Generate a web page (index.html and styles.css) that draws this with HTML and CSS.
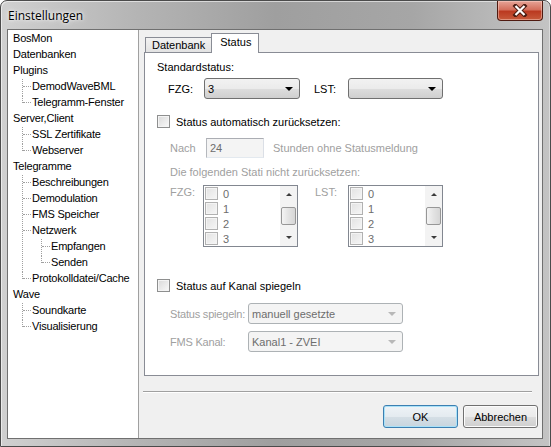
FILE: index.html
```html
<!DOCTYPE html>
<html>
<head>
    <meta charset="utf-8">
    <title>Einstellungen</title>
    <link rel="stylesheet" href="styles.css">
</head>
<body>
<div class="window">
    <div class="titlebar">
        <span class="title">Einstellungen</span>
        <span class="close">
            <svg width="16" height="13" viewBox="0 0 16 13">
                <path d="M3.5 2 L12.5 11 M12.5 2 L3.5 11" stroke="#4a1c12" stroke-width="4.2" stroke-linecap="square"/>
                <path d="M3.5 2 L12.5 11 M12.5 2 L3.5 11" stroke="#ffffff" stroke-width="2.2"/>
            </svg>
        </span>
    </div>

    <div class="client">
        <!-- Baum mit den Einstellungsseiten -->
        <ul class="tree">
            <li><span>BosMon</span></li>
            <li><span>Datenbanken</span></li>
            <li><span>Plugins</span>
                <ul>
                    <li><span>DemodWaveBML</span></li>
                    <li><span>Telegramm-Fenster</span></li>
                </ul>
            </li>
            <li><span>Server,Client</span>
                <ul>
                    <li><span>SSL Zertifikate</span></li>
                    <li><span>Webserver</span></li>
                </ul>
            </li>
            <li><span>Telegramme</span>
                <ul>
                    <li><span>Beschreibungen</span></li>
                    <li><span>Demodulation</span></li>
                    <li><span>FMS Speicher</span></li>
                    <li><span>Netzwerk</span>
                        <ul>
                            <li><span>Empfangen</span></li>
                            <li><span>Senden</span></li>
                        </ul>
                    </li>
                    <li><span>Protokolldatei/Cache</span></li>
                </ul>
            </li>
            <li><span>Wave</span>
                <ul>
                    <li><span>Soundkarte</span></li>
                    <li><span>Visualisierung</span></li>
                </ul>
            </li>
        </ul>

        <div class="pane">
            <div class="tabs">
                <span class="tab">Datenbank</span>
                <span class="tab current">Status</span>
            </div>

            <div class="page">
                <div class="heading">Standardstatus:</div>
                <div class="row std">
                    <span class="lbl fzg">FZG:</span>
                    <div class="combo"><span>3</span><i class="arrow"></i></div>
                    <span class="lbl lst">LST:</span>
                    <div class="combo"><span></span><i class="arrow"></i></div>
                </div>

                <div class="check first"><span class="box"></span>Status automatisch zurücksetzen:</div>

                <div class="row sub after-check">
                    <span class="dis nach">Nach</span>
                    <span class="textbox">24</span>
                    <span class="dis">Stunden ohne Statusmeldung</span>
                </div>
                <div class="sub dis note">Die folgenden Stati nicht zurücksetzen:</div>

                <div class="row sub lists">
                    <span class="dis lbl fzg2">FZG:</span>
                    <div class="listbox">
                        <ul>
                            <li><span class="box"></span>0</li>
                            <li><span class="box"></span>1</li>
                            <li><span class="box"></span>2</li>
                            <li><span class="box"></span>3</li>
                        </ul>
                        <div class="vscroll">
                            <span class="up"></span>
                            <span class="track"><span class="thumb"></span></span>
                            <span class="down"></span>
                        </div>
                    </div>
                    <span class="dis lbl lst2">LST:</span>
                    <div class="listbox">
                        <ul>
                            <li><span class="box"></span>0</li>
                            <li><span class="box"></span>1</li>
                            <li><span class="box"></span>2</li>
                            <li><span class="box"></span>3</li>
                        </ul>
                        <div class="vscroll">
                            <span class="up"></span>
                            <span class="track"><span class="thumb"></span></span>
                            <span class="down"></span>
                        </div>
                    </div>
                </div>

                <div class="check second"><span class="box"></span>Status auf Kanal spiegeln</div>

                <div class="row sub mirror">
                    <span class="dis lbl wide">Status spiegeln:</span>
                    <div class="combo off long"><span>manuell gesetzte</span><i class="arrow"></i></div>
                </div>
                <div class="row sub channel">
                    <span class="dis lbl wide">FMS Kanal:</span>
                    <div class="combo off long"><span>Kanal1 - ZVEI</span><i class="arrow"></i></div>
                </div>
            </div>

            <div class="sep"></div>

            <div class="buttons">
                <span class="btn default">OK</span>
                <span class="btn">Abbrechen</span>
            </div>
        </div>
    </div>
</div>
</body>
</html>
```

FILE: styles.css
```css
html,body,div,span,ul,li{margin:0;padding:0;}
ul,li{list-style:none;}
*{box-sizing:border-box;}
body{
    background:#fff;
    font-family:"Liberation Sans",Arial,sans-serif;
    font-size:11px;
    color:#000;
}

/* Fensterrahmen */
.window{
    width:551px; height:447px;
    border:1px solid #4b4b4b;
    border-radius:7px 7px 0 0;
    padding:0 7px 7px 6px;
    background:linear-gradient(to right,#d0d0d0 0%,#b4b4b4 25%,#9f9f9f 50%,#a6a6a6 75%,#c4c4c4 100%);
    box-shadow:inset 1px 1px 0 rgba(255,255,255,0.55), inset -1px 0 0 rgba(255,255,255,0.4);
}
.titlebar{
    height:28px;
    display:flex; align-items:flex-start;
}
.title{
    font-family:"Open Sans","Noto Sans",sans-serif;
    font-size:12px;
    margin:6px 0 0 1px;
    text-shadow:0 0 6px rgba(255,255,255,0.9),0 0 3px rgba(255,255,255,0.9);
}
.close{
    margin-left:auto;
    width:46px; height:20px;
    border:1px solid #4f1a10; border-top:none;
    border-radius:0 0 4px 4px;
    background:linear-gradient(#e6a497 0%,#d4705d 45%,#bb3a21 55%,#c75a3b 100%);
    box-shadow:inset 0 0 0 1px rgba(255,220,210,0.45);
    display:flex; align-items:center; justify-content:center;
}

.client{
    height:410px;
    border:1px solid #707070;
    display:flex;
    background:#f0f0f0;
}

/* Baumansicht links */
.tree{
    width:131px; flex:none;
    background:#fff;
    border-right:1px solid #a0a0a0;
    letter-spacing:-0.2px;
}
.tree ul{padding-left:19px;}
.tree li{position:relative;}
.tree span{
    display:block; height:16px; line-height:16px;
    padding-left:5px; white-space:nowrap;
}
.tree ul > li::before{
    content:''; position:absolute; left:-5px; top:1px; bottom:0;
    border-left:1px dotted #a0a0a0;
}
.tree ul > li:last-child::before{bottom:auto; height:8px;}
.tree ul > li::after{
    content:''; position:absolute; left:-4px; top:8px; width:8px;
    border-top:1px dotted #a0a0a0;
}

/* rechter Bereich mit Karteireitern */
.pane{flex:1; padding:0 3px 0 5px; display:flex; flex-direction:column;}
.tabs{height:22px; display:flex; align-items:flex-end; padding-left:1px; position:relative; z-index:1;}
.tab{
    height:15px; line-height:14px;
    padding:0 6px 0 6px;
    border:1px solid #898c95; border-bottom:none;
    background:linear-gradient(#f2f2f2,#e3e3e3);
}
.tab.current{
    height:20px; line-height:17px;
    margin-left:-1px; margin-bottom:-1px;
    padding:0 7px 0 8px;
    background:#fff;
}
.page{
    height:324px;
    border:1px solid #898c95;
    background:#fff;
    padding:8px 0 0 12px;
}
.heading{line-height:13px;}
.row{display:flex; align-items:center;}
.std{margin-top:4px; padding-left:11px;}
.lbl{flex:none; white-space:nowrap;}
.fzg{width:36px;}
.lst{width:34px; margin-left:14px;}

/* Kombinationsfelder */
.combo{
    width:96px; height:21px;
    border:1px solid #707070; border-radius:3px;
    background:linear-gradient(#f2f2f2 0%,#ebebeb 50%,#dddddd 51%,#cfcfcf 100%);
    display:flex; align-items:center;
    padding-left:3px;
}
.combo + .lbl + .combo{width:95px;}
.combo span{flex:1; white-space:nowrap;}
.arrow{
    width:0; height:0; margin-right:6px;
    border-left:4px solid transparent; border-right:4px solid transparent;
    border-top:4px solid #000;
}
.combo.off{
    background:#f4f4f4;
    border-color:#adb2b5;
    color:#6d6d6d;
}
.combo.off .arrow{border-top-color:#b8b8b8;}
.combo.long{width:155px;}

/* Kontrollkästchen */
.check{display:flex; align-items:center; height:15px;}
.check.first{margin-top:15px;}
.check.second{margin-top:31px;}
.box{
    flex:none;
    width:13px; height:13px;
    border:1px solid #8e8f8f;
    background:linear-gradient(135deg,#d9d9d9,#f9f9f9);
    box-shadow:inset 0 0 0 1px #f4f4f4;
    margin-right:6px;
}

.dis{color:#a0a0a0;}
.sub{padding-left:13px;}
.after-check{margin-top:9px;}
.nach{width:36px;}
.textbox{
    width:58px; height:20px; line-height:18px;
    border:1px solid; border-color:#abadb3 #dbdfe6 #e3e9ef #b5b8bd;
    background:#f4f4f4; color:#6d6d6d;
    padding-left:3px; margin-right:9px;
}
.note{margin-top:8px; line-height:13px;}

/* Listen mit Kontrollkästchen */
.lists{margin-top:6px; align-items:flex-start;}
.fzg2{width:33px; margin-top:1px;}
.lst2{width:33px; margin-left:17px; margin-top:1px;}
.listbox{
    width:95px; height:62px;
    border:1px solid #828790;
    background:#fff;
    display:flex;
}
.listbox ul{flex:1; padding-left:1px;}
.listbox li{height:15px; display:flex; align-items:center; color:#6d6d6d;}
.listbox .box{border-color:#b1b1b1; background:linear-gradient(135deg,#e2e2e2,#f6f6f6); margin-right:5px;}
.vscroll{width:17px; display:flex; flex-direction:column; background:#f3f3f3;}
.vscroll .up,.vscroll .down{height:17px; display:flex; align-items:center; justify-content:center;}
.vscroll .up::after{
    content:''; border-left:3px solid transparent; border-right:3px solid transparent;
    border-bottom:3px solid #3b3b3b;
}
.vscroll .down::after{
    content:''; border-left:3px solid transparent; border-right:3px solid transparent;
    border-top:3px solid #3b3b3b;
}
.vscroll .track{flex:1; padding:4px 1px 0 1px;}
.vscroll .thumb{
    display:block; height:18px;
    border:1px solid #979797; border-radius:2px;
    background:linear-gradient(to right,#f4f4f4,#e3e3e3 50%,#d6d6d6);
}

.mirror{margin-top:10px;}
.channel{margin-top:7px;}
.wide{width:78px; letter-spacing:-0.2px;}

/* Trennlinie und Schaltflächen */
.sep{
    margin:15px 7px 0 -1px;
    height:2px;
    border-top:1px solid #a0a0a0;
    border-bottom:1px solid #fff;
}
.buttons{display:flex; justify-content:flex-end; gap:5px; margin-top:12px; padding-right:1px;}
.btn{
    width:75px; height:23px;
    border:1px solid #707070; border-radius:3px;
    background:linear-gradient(#f2f2f2 0%,#ebebeb 50%,#dddddd 51%,#cfcfcf 100%);
    display:flex; align-items:center; justify-content:center;
    box-shadow:inset 0 0 0 1px #fcfcfc;
}
.btn.default{
    border-color:#3c7fb1;
    background:linear-gradient(#eef3f7 0%,#e4ebf0 50%,#d5dfe6 51%,#c8d5de 100%);
    box-shadow:inset 0 0 0 1px #a9e1f8;
}
```
